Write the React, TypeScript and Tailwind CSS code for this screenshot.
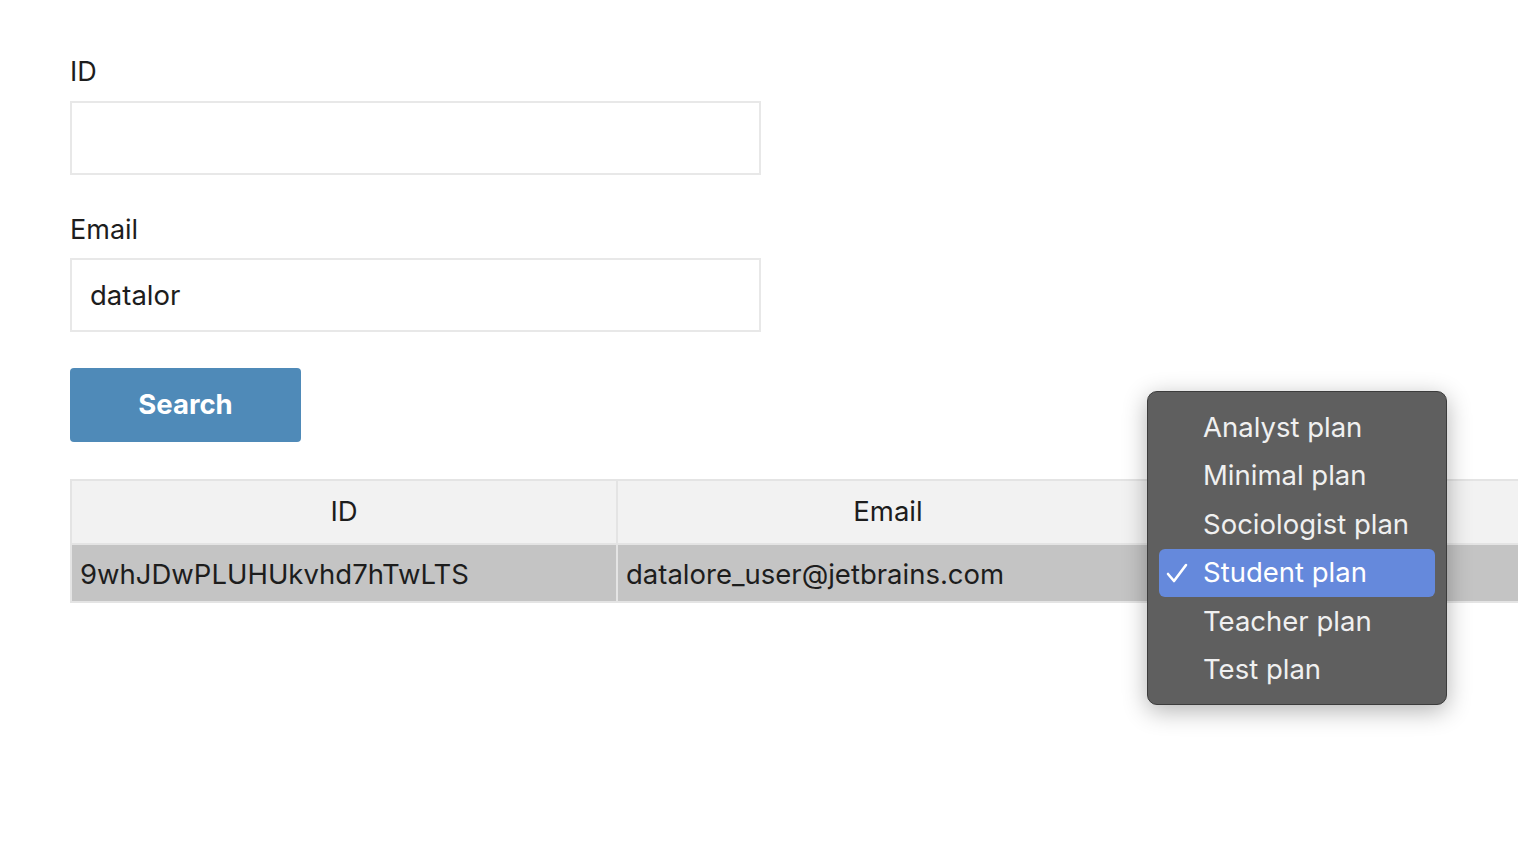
import React from "react";

const plans = [
  "Analyst plan",
  "Minimal plan",
  "Sociologist plan",
  "Student plan",
  "Teacher plan",
  "Test plan",
];

export default function App() {
  return (
    <div
      className="relative w-[1518px] h-[850px] overflow-hidden bg-white text-[#1d1d1d]"
      style={{ fontFamily: "Inter, 'Liberation Sans', sans-serif" }}
    >
      <div className="pl-[70px] pt-[56px]">
        {/* Form */}
        <div className="text-[27px] leading-[32px] mb-[13px]">ID</div>
        <input
          className="block w-[691px] h-[74px] border-2 border-[#e8e8e8] px-[18px] text-[27.5px] outline-none"
          defaultValue=""
        />
        <div className="text-[27px] leading-[32px] mt-[39px] mb-[12px]">Email</div>
        <input
          className="block w-[691px] h-[74px] border-2 border-[#e8e8e8] px-[18px] text-[27.5px] outline-none"
          defaultValue="datalor"
        />
        <button className="mt-[36px] w-[231px] h-[74px] rounded-[4px] bg-[#4f8ab8] text-white text-[27.5px] font-bold">
          Search
        </button>

        {/* Results */}
        <table className="mt-[37px] w-[1700px] border-collapse border-2 border-[#e6e6e6] text-[27.5px]">
          <thead>
            <tr className="h-[64px] bg-[#f2f2f2]">
              <th className="w-[546px] font-normal text-center border-2 border-[#e4e4e4]">ID</th>
              <th className="w-[542px] font-normal text-center border-2 border-[#e4e4e4]">Email</th>
              <th className="font-normal text-center border-2 border-[#e4e4e4]"></th>
            </tr>
          </thead>
          <tbody>
            <tr className="h-[58px] bg-[#c4c4c4]">
              <td className="px-[8px] pt-[3px] border-2 border-[#e4e4e4]">9whJDwPLUHUkvhd7hTwLTS</td>
              <td className="px-[8px] pt-[3px] border-2 border-[#e4e4e4]">datalore_user@jetbrains.com</td>
              <td className="px-[8px] border-2 border-[#e4e4e4]"></td>
            </tr>
          </tbody>
        </table>
      </div>

      {/* Native select popup */}
      <div className="absolute left-[1147px] top-[391px] w-[300px] h-[314px] rounded-[10px] bg-[#5f5f5f] border border-[#3c3c3c] shadow-[0_6px_24px_rgba(0,0,0,0.3)] px-[11px] py-[11px]">
        <ul className="flex flex-col">
          {plans.map((p) => {
            const active = p === "Student plan";
            return (
              <li
                key={p}
                className={`h-[48.5px] flex items-center rounded-[6px] text-[27.5px] ${
                  active ? "bg-[#6589dc] text-white" : "text-[#f0f0f0]"
                }`}
              >
                <span className="w-[44px] shrink-0 flex justify-center pr-[8px]">
                  {active && (
                    <svg width="22" height="20" viewBox="0 0 22 20" fill="none">
                      <path
                        d="M2 11 L8 18 L20 2"
                        stroke="white"
                        strokeWidth="2.6"
                        strokeLinecap="round"
                        strokeLinejoin="round"
                      />
                    </svg>
                  )}
                </span>
                <span>{p}</span>
              </li>
            );
          })}
        </ul>
      </div>
    </div>
  );
}
